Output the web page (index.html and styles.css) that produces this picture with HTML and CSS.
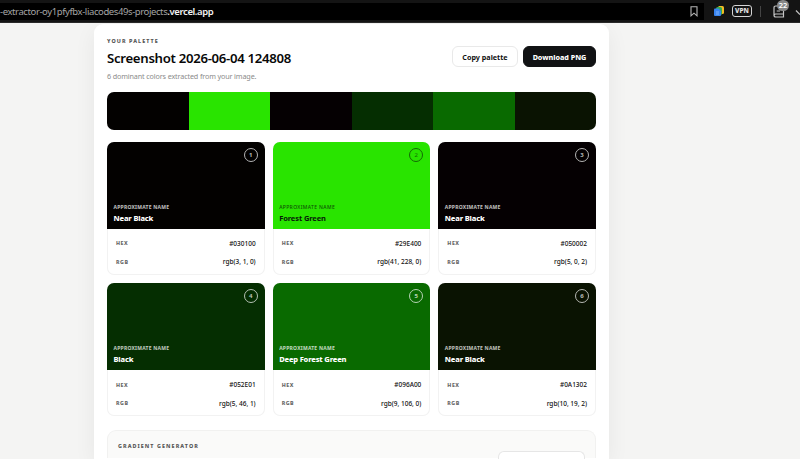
FILE: index.html
```html
<!DOCTYPE html>
<html lang="en">
<head>
    <meta charset="UTF-8">
    <meta name="viewport" content="width=device-width, initial-scale=1.0">
    <title>Palette Extractor</title>
    <link rel="stylesheet" href="styles.css">
</head>
<body>
    <header class="browser-bar">
        <div class="address">
            <span class="url"><span>-extractor-oy1pfyfbx-liacodes49s-projects</span><b>.vercel.app</b></span>
            <svg class="bookmark" width="8" height="11" viewBox="0 0 8 11"><path d="M1 .8h6v9L4 7.2 1 9.8z" fill="none" stroke="#b5b5b5" stroke-width="1.1"/></svg>
        </div>
        <svg class="files" width="12" height="12" viewBox="0 0 12 12">
            <rect x="5" y="1" width="6" height="8" rx="1.5" fill="#f2bd24"/>
            <rect x="3" y="2" width="6" height="8" rx="1.5" fill="#35a853"/>
            <path d="M2 3.5h3.5L8 6v4q0 1-1 1H2q-1 0-1-1V4.5q0-1 1-1z" fill="#3984f0"/>
            <path d="M3 7h3M3 9h3" stroke="#8fc0ff" stroke-width=".8"/>
        </svg>
        <span class="vpn">VPN</span>
        <span class="divider"></span>
        <span class="reader">
            <svg width="12" height="13" viewBox="0 0 12 13"><path d="M10.5 6v6H2.7Q1 12 1 10.3V2.7Q1 1 2.7 1H7M1.2 10q.3-1 1.5-1h7.8M3.7 6H7" fill="none" stroke="#c4c4c4" stroke-width="1.2"/></svg>
            <span class="badge">22</span>
        </span>
        <svg class="download" width="5" height="10" viewBox="0 0 5 10"><path d="M1 4.5 5 8.5" fill="none" stroke="#c4c4c4" stroke-width="1.2"/></svg>
    </header>

    <main class="panel">
        <div class="panel-header">
            <div>
                <div class="eyebrow">YOUR PALETTE</div>
                <h1>Screenshot 2026-06-04 124808</h1>
                <p>6 dominant colors extracted from your image.</p>
            </div>
            <div class="actions">
                <button>Copy palette</button>
                <button class="primary">Download PNG</button>
            </div>
        </div>

        <div class="strip">
            <div class="c1"></div>
            <div class="c2"></div>
            <div class="c3"></div>
            <div class="c4"></div>
            <div class="c5"></div>
            <div class="c6"></div>
        </div>

        <div class="cards">
            <div class="card">
                <div class="swatch c1">
                    <span class="number">1</span>
                    <small>APPROXIMATE NAME</small>
                    <strong>Near Black</strong>
                </div>
                <div class="row"><b>HEX</b><span>#030100</span></div>
                <div class="row"><b>RGB</b><span>rgb(3, 1, 0)</span></div>
            </div>
            <div class="card">
                <div class="swatch light c2">
                    <span class="number">2</span>
                    <small>APPROXIMATE NAME</small>
                    <strong>Forest Green</strong>
                </div>
                <div class="row"><b>HEX</b><span>#29E400</span></div>
                <div class="row"><b>RGB</b><span>rgb(41, 228, 0)</span></div>
            </div>
            <div class="card">
                <div class="swatch c3">
                    <span class="number">3</span>
                    <small>APPROXIMATE NAME</small>
                    <strong>Near Black</strong>
                </div>
                <div class="row"><b>HEX</b><span>#050002</span></div>
                <div class="row"><b>RGB</b><span>rgb(5, 0, 2)</span></div>
            </div>
            <div class="card">
                <div class="swatch c4">
                    <span class="number">4</span>
                    <small>APPROXIMATE NAME</small>
                    <strong>Black</strong>
                </div>
                <div class="row"><b>HEX</b><span>#052E01</span></div>
                <div class="row"><b>RGB</b><span>rgb(5, 46, 1)</span></div>
            </div>
            <div class="card">
                <div class="swatch c5">
                    <span class="number">5</span>
                    <small>APPROXIMATE NAME</small>
                    <strong>Deep Forest Green</strong>
                </div>
                <div class="row"><b>HEX</b><span>#096A00</span></div>
                <div class="row"><b>RGB</b><span>rgb(9, 106, 0)</span></div>
            </div>
            <div class="card">
                <div class="swatch c6">
                    <span class="number">6</span>
                    <small>APPROXIMATE NAME</small>
                    <strong>Near Black</strong>
                </div>
                <div class="row"><b>HEX</b><span>#0A1302</span></div>
                <div class="row"><b>RGB</b><span>rgb(10, 19, 2)</span></div>
            </div>
        </div>

        <section class="gradient">
            <div class="eyebrow">GRADIENT GENERATOR</div>
            <div class="gradient-select"></div>
        </section>
    </main>
</body>
</html>
```
FILE: styles.css
```css
* {
    box-sizing: border-box;
}
body {
    margin: 0;
    height: 459px;
    overflow: hidden;
    background: #f4f4f3;
    color: #111;
    font-family: "Noto Sans", "Open Sans", sans-serif;
}

/* browser toolbar */
.browser-bar {
    display: flex;
    align-items: center;
    height: 23px;
    background: #141414;
    border-bottom: 1px solid #292929;
}
.address {
    display: flex;
    align-items: center;
    justify-content: space-between;
    width: 704px;
    height: 17px;
    padding-right: 6px;
    background: #000;
}
.url {
    color: #a5a5a5;
    font-size: 9.5px;
    letter-spacing: -0.4px;
    white-space: nowrap;
}
.url b {
    color: #f1f1f1;
    font-weight: 600;
}
.files {
    margin-left: 9px;
}
.vpn {
    width: 20px;
    height: 12px;
    margin-left: 7px;
    border: 1px solid #d4d4d4;
    border-radius: 3px;
    color: #e5e5e5;
    font-size: 6.5px;
    font-weight: 800;
    line-height: 10px;
    text-align: center;
}
.divider {
    width: 1px;
    height: 11px;
    margin-left: 8px;
    background: #444;
}
.reader {
    position: relative;
    height: 13px;
    margin-left: 12px;
}
.reader svg {
    display: block;
}
.badge {
    position: absolute;
    top: -5px;
    left: 4px;
    width: 12px;
    height: 11px;
    border-radius: 6px;
    background: #888;
    color: #fff;
    font-size: 7.5px;
    font-weight: 600;
    line-height: 11px;
    text-align: center;
}
.download {
    margin-left: 10px;
}

/* palette panel */
.panel {
    width: 515px;
    height: 435px;
    margin: 1px 0 0 94px;
    padding: 13px 13px 0;
    border-radius: 9px 9px 0 0;
    background: #fff;
    box-shadow: 0 6px 22px rgba(0, 0, 0, 0.06);
}
.panel-header {
    display: flex;
    justify-content: space-between;
    height: 55px;
}
.eyebrow {
    color: #555;
    font-size: 5.4px;
    font-weight: 800;
    line-height: 8px;
    letter-spacing: 1.06px;
}
h1 {
    margin: 3px 0 0;
    color: #080808;
    font-size: 13.2px;
    font-weight: 600;
    line-height: 20px;
    letter-spacing: -0.3px;
    white-space: nowrap;
}
p {
    margin: 3px 0 0;
    color: #8b8b8b;
    font-size: 7.2px;
    line-height: 11px;
    letter-spacing: -0.13px;
}
.actions {
    display: flex;
    gap: 5px;
    padding-top: 9px;
}
button {
    width: 66px;
    height: 21px;
    padding: 0;
    border: 1px solid #e9e9e9;
    border-radius: 6px;
    background: #fff;
    color: #111;
    font-family: inherit;
    font-size: 7.2px;
    font-weight: 700;
    white-space: nowrap;
}
button.primary {
    width: 73px;
    border-color: #111214;
    background: #111214;
    color: #fff;
    font-weight: 800;
    letter-spacing: -0.02px;
}
.strip {
    display: grid;
    grid-template-columns: repeat(6, 1fr);
    height: 38px;
    border-radius: 7px;
    overflow: hidden;
}
.c1 { background: #030100; }
.c2 { background: #29e400; }
.c3 { background: #050002; }
.c4 { background: #052e01; }
.c5 { background: #096a00; }
.c6 { background: #0a1302; }

.cards {
    display: grid;
    grid-template-columns: repeat(3, 1fr);
    gap: 8px;
    margin-top: 11.5px;
}
.card {
    height: 133.3px;
    border-radius: 7px;
    box-shadow: inset 0 0 0 1px #f2f2f2;
    overflow: hidden;
}
.swatch {
    display: flex;
    flex-direction: column;
    justify-content: flex-end;
    position: relative;
    height: 87.7px;
    margin-bottom: 5px;
    padding: 0 6.5px 5px;
    color: #fff;
}
.swatch small {
    font-size: 5px;
    font-weight: 700;
    line-height: 9px;
    letter-spacing: 0.24px;
    opacity: 0.75;
}
.swatch strong {
    font-size: 7.5px;
    font-weight: 800;
    line-height: 12px;
    letter-spacing: -0.16px;
}
.swatch.light {
    color: #07180a;
}
.swatch.light small {
    font-weight: 500;
    letter-spacing: 0.36px;
}
.swatch.light strong {
    font-weight: 700;
    letter-spacing: -0.1px;
}
.number {
    position: absolute;
    top: 6px;
    right: 7px;
    width: 14px;
    height: 14px;
    border: 1px solid;
    border-radius: 50%;
    font-size: 6px;
    font-weight: 700;
    line-height: 12px;
    text-align: center;
    opacity: 0.7;
}
.swatch.light .number {
    font-weight: 400;
    opacity: 0.6;
}
.row {
    display: flex;
    align-items: center;
    justify-content: space-between;
    height: 18.4px;
    padding: 0 9px;
    font-size: 6.5px;
    font-weight: 500;
}
.row b {
    color: #666;
    font-size: 5.3px;
    font-weight: 800;
    letter-spacing: 0.5px;
}

.gradient {
    display: flex;
    justify-content: space-between;
    height: 28px;
    margin-top: 14.4px;
    padding: 11px 10px 0;
    border: 1px solid #f1f1f0;
    border-bottom: 0;
    border-radius: 9px 9px 0 0;
    background: #fafaf9;
}
.gradient-select {
    width: 87px;
    height: 8px;
    margin-top: 9px;
    border: 1px solid #e6e6e6;
    border-bottom: 0;
    border-radius: 6px 6px 0 0;
    background: #fff;
}
```
